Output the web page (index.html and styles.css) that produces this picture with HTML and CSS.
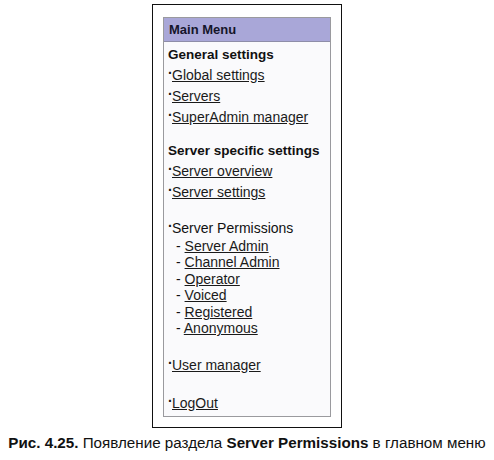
FILE: index.html
```html
<!DOCTYPE html>
<html>
<head>
<meta charset="utf-8">
<link rel="stylesheet" href="styles.css">
</head>
<body>
<div class="figure">
  <div class="frame">
    <div class="panel">
      <div class="panel-head">Main Menu</div>
      <div class="panel-body">
        <div class="section-title">General settings</div>
        <div class="item"><span class="dot">·</span><a href="#">Global settings</a></div>
        <div class="item"><span class="dot">·</span><a href="#">Servers</a></div>
        <div class="item"><span class="dot">·</span><a href="#">SuperAdmin manager</a></div>

        <div class="section-title gap-section">Server specific settings</div>
        <div class="item"><span class="dot">·</span><a href="#">Server overview</a></div>
        <div class="item"><span class="dot">·</span><a href="#">Server settings</a></div>

        <div class="item group-head gap-group"><span class="dot">·</span>Server Permissions</div>
        <div class="sub">- <a href="#">Server Admin</a></div>
        <div class="sub">- <a href="#">Channel Admin</a></div>
        <div class="sub">- <a href="#">Operator</a></div>
        <div class="sub">- <a href="#">Voiced</a></div>
        <div class="sub">- <a href="#">Registered</a></div>
        <div class="sub">- <a href="#">Anonymous</a></div>

        <div class="item gap-user"><span class="dot">·</span><a href="#">User manager</a></div>
        <div class="item gap-logout"><span class="dot">·</span><a href="#">LogOut</a></div>
      </div>
    </div>
  </div>
  <p class="caption"><b>Рис. 4.25.</b> Появление раздела <b>Server Permissions</b> в главном меню</p>
</div>
</body>
</html>
```

FILE: styles.css
```css
html, body {
  margin: 0;
  padding: 0;
  background: #ffffff;
}

body {
  font-family: "Liberation Sans", Arial, sans-serif;
  color: #111111;
}

.figure {
  width: 494px;
  height: 460px;
  padding-top: 4px;
  box-sizing: border-box;
}

.frame {
  width: 190px;
  height: 424px;
  margin-left: 152px;
  box-sizing: border-box;
  border: 1px solid #111111;
  padding: 12px 10px 10px 10px;
}

.panel {
  height: 100%;
  box-sizing: border-box;
  border: 1px solid #9a9a9e;
  background: #fafafc;
}

.panel-head {
  height: 23px;
  line-height: 23px;
  background: #a9a7d8;
  border-bottom: 1px solid #8e8da8;
  padding-left: 5px;
  font-size: 13px;
  font-weight: bold;
  color: #15152a;
}

.panel-body {
  padding: 1.5px 0 0 4px;
  font-size: 14px;
}

.section-title {
  font-weight: bold;
  font-size: 13.5px;
  line-height: 21px;
}

.item {
  line-height: 21px;
}

.dot {
  display: inline-block;
  width: 4px;
  font-weight: bold;
  position: relative;
  top: -2px;
}

a {
  color: #1a1a1a;
  text-decoration: underline;
}

.gap-section { margin-top: 12.5px; }
.gap-group { margin-top: 15.5px; }
.group-head { line-height: 19px; }

.sub {
  line-height: 16.6px;
  padding-left: 8px;
}

.gap-user { margin-top: 17.5px; }
.gap-logout { margin-top: 17px; }

.caption {
  margin: 6px 0 0 0;
  text-align: center;
  font-size: 15.2px;
  line-height: 18px;
  color: #111111;
}
```
